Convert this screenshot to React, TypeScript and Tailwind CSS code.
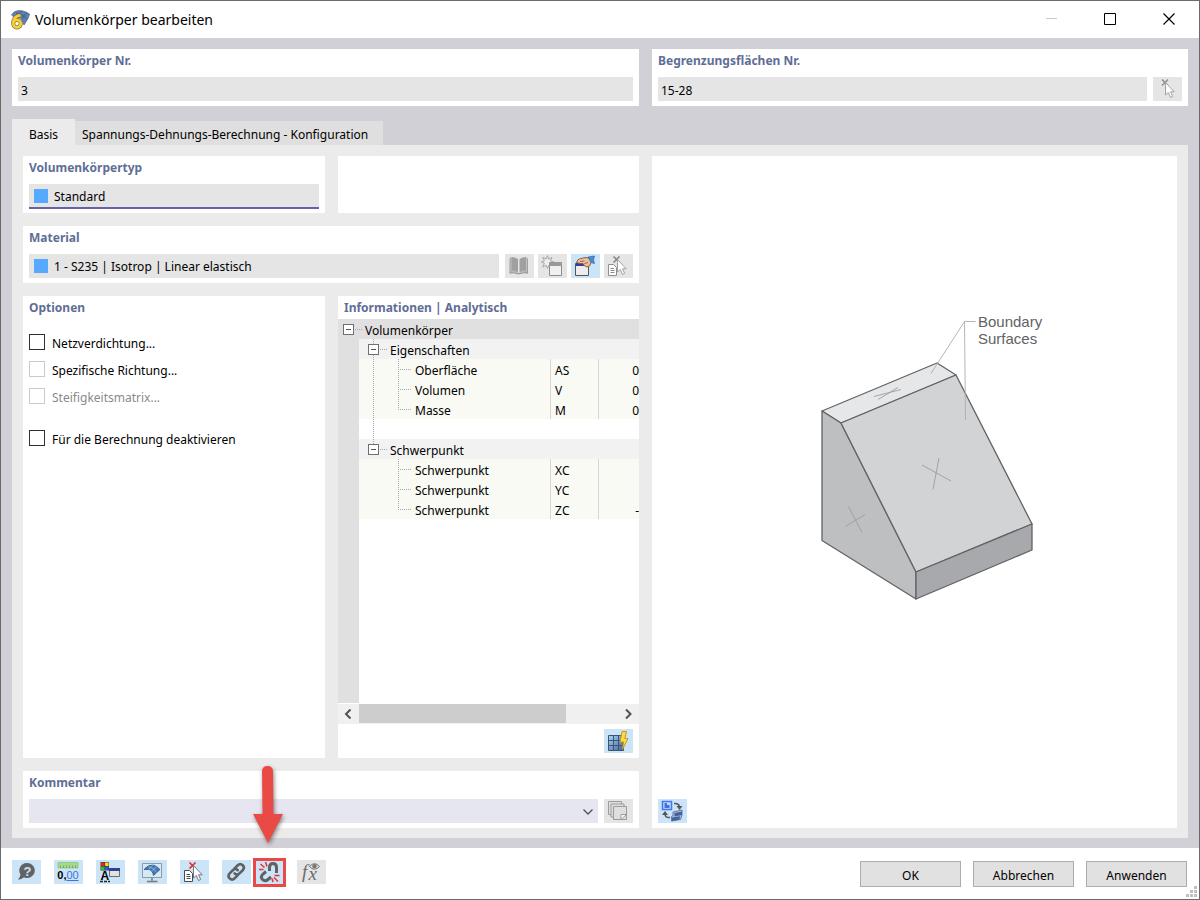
import type { ReactNode } from "react";

const titleText = "text-[12px] leading-6 font-bold text-[#5f6e96]";
const fieldText = "text-[12px] leading-[18px] text-black";

function Card({ title, className = "", children }: { title?: string; className?: string; children?: ReactNode }) {
  return (
    <section className={`min-w-0 bg-white px-1.5 pb-1 ${className}`}>
      {title && <h2 className={titleText}>{title}</h2>}
      {children}
    </section>
  );
}

function IconButton({ label, tone, children }: { label: string; tone: "blue" | "gray"; children: ReactNode }) {
  return (
    <button
      type="button"
      aria-label={label}
      className={`h-6 w-[29px] shrink-0 ${tone === "blue" ? "bg-[#cbe4f8]" : "bg-[#e5e5e5]"}`}
    >
      <svg viewBox="0 0 29 24" className="block h-6 w-[29px]" fill="none">
        {children}
      </svg>
    </button>
  );
}

function AppIcon() {
  return (
    <svg viewBox="0 0 20 20" className="h-5 w-5 shrink-0" fill="none">
      <path d="M1.500 5 L4 2 Q8 -.5 13 1 Q17 2 19.500 4 L18.500 7.500 L16.500 11 L14 15 L11 8 L5 8 Z" fill="#5c80b4" stroke="#5d6f89" strokeWidth=".8" />
      <path d="M6 3 Q12 3 17 9 M12 1 Q9 3 7 6 M17 3 Q13 5 12 9" stroke="#385682" strokeWidth=".8" />
      <path d="M10.500 5.200 Q4 6 3.200 12.500" stroke="#7d6a2a" strokeWidth="4" />
      <circle cx="7" cy="13.600" r="3.800" stroke="#7d6a2a" strokeWidth="4" />
      <path d="M10.500 5.200 Q4 6 3.200 12.500" stroke="#f5cf36" strokeWidth="2.800" />
      <circle cx="7" cy="13.600" r="3.800" stroke="#f5cf36" strokeWidth="2.800" />
    </svg>
  );
}

const cursor = "M0 0 L0 12.500 L2.800 10 L5 15 L7.200 14 L5 9.300 L8.700 9.300 Z";

function PickIcon() {
  return (
    <>
      <path d="M9 2.500 L15 8.500 M15 2.500 L9 8.500" stroke="#8c8c8c" strokeWidth="1.500" />
      <path transform="translate(12.500 5.500)" d={cursor} fill="#fff" stroke="#a2a2a2" />
    </>
  );
}

function BookIcon() {
  return (
    <>
      <path d="M4.500 5 L6 3 Q10 3 13 5 L13 19 Q9 17 4.500 19 Z M23 5 L21.500 3 Q17.500 3 14.500 5 L14.500 19 Q18.500 17 23 19 Z" fill="#a0a0a0" />
      <path d="M6 3 L6 17 Q10 16.500 13.500 19.500 Q17 16.500 21.500 17 L21.500 3" stroke="#c2c2c2" />
      <path d="M4.500 19 Q9 18 13.500 20 Q18 18 23 19" stroke="#8b8b8b" />
    </>
  );
}

function NewIcon() {
  return (
    <>
      <path d="M9.500 1.500 L10.600 5.200 L14 3.500 L12.500 7 L16 8 L12.500 9.300 L14 13 L10.800 11.300 L9.500 14.500 L8.200 11.300 L4.800 13 L6.400 9.300 L3.500 8 L6.400 6.800 L4.800 3.500 L8.200 5 Z" fill="#eee" stroke="#a8a8a8" />
      <path d="M11.500 9.500 H23.500 V21.500 H11.500 Z" fill="#f0f0f0" stroke="#8c8c8c" />
      <path d="M11 8 H24 V12 H11 Z" fill="#999" />
    </>
  );
}

function EditIcon() {
  return (
    <>
      <path d="M4.500 9.500 H17.500 V21.500 H4.500 Z" fill="#ededed" stroke="#555" />
      <path d="M5 9 H17 V12 H5 Z" fill="#2f3fa0" />
      <path d="M5.500 8.500 Q6.500 5 9.500 4.500 L15 3.500 L19.500 4.500 L20 8.500 L18.500 12 L16 13 L13.500 11.800 L12 9.500 L9 9.500 Z" fill="#ecc09a" stroke="#8f5e3c" />
      <path d="M9 7.500 L13.500 7 M13.500 9.500 L17 8.500" stroke="#99633f" />
      <path d="M17 3 L23.500 2 L22.500 6 L23.500 9.500 L20 8.500 Z" fill="#4a8bd3" stroke="#376aa5" strokeWidth=".7" />
    </>
  );
}

function PickFromListIcon({ active = false }: { active?: boolean }) {
  const line = active ? "#4b4b4b" : "#8e8e8e";
  return (
    <>
      <path d="M4.500 10.500 H9.500 L12.500 13.500 V21.500 H4.500 Z" fill="#fff" stroke={line} />
      <path d="M6.500 14.500 H10 M6.500 16.500 H10.500 M6.500 18.500 H10.500" stroke={line} />
      <path d="M9.500 2.500 L15.500 8.500 M15.500 2.500 L9.500 8.500" stroke={active ? "#ee2525" : "#888"} strokeWidth="1.600" />
      <path transform="translate(13.500 5.500)" d={cursor} fill="#fff" stroke={active ? "#777" : "#a2a2a2"} />
    </>
  );
}

function GridFlashIcon() {
  return (
    <>
      <defs>
        <linearGradient id="gridBlue" x1="0" y1="0" x2="1" y2="1">
          <stop stopColor="#a9d6f5" />
          <stop offset="1" stopColor="#426191" />
        </linearGradient>
      </defs>
      <path d="M4.500 6.500 H19.500 V21.500 H4.500 Z" fill="url(#gridBlue)" stroke="#3c5479" />
      <path d="M9.500 6.500 V21.500 M14.500 6.500 V21.500 M4.500 11.500 H19.500 M4.500 16.500 H19.500" stroke="#3c5479" />
      <path d="M18 2.500 H22.500 L20.800 9.500 H24 L18.500 20.500 L19.500 13 H16 Z" fill="#fbdc3b" stroke="#c7942d" />
    </>
  );
}

function CopiesIcon() {
  return (
    <g stroke="#9b9b9b" fill="#dfdfdf">
      <path d="M4.500 2.500 H17.500 V15.500 H4.500 Z" />
      <path d="M7 5 H20 V18 H7 Z" />
      <path d="M9.500 7.500 H22.500 V20.500 H9.500 Z" />
      <path d="M17 20.500 V15.500 H22.500 L17 20.500" fill="#fff" />
    </g>
  );
}

function SwapViewIcon() {
  return (
    <>
      <path d="M4.500 2.500 H13.500 V10.500 H4.500 Z" fill="#c5d9fb" stroke="#4478e8" strokeWidth="1.500" />
      <path d="M6.500 4 H9 V6 H11.500 V9 H6.500 Z" fill="#3e72e4" />
      <path d="M16 4.500 Q21 4 21.500 8" stroke="#565656" strokeWidth="1.500" />
      <path d="M18.500 7 H24.500 L21.500 11 Z" fill="#565656" />
      <path d="M12 18.500 Q7 19 7 15" stroke="#565656" strokeWidth="1.500" />
      <path d="M4 16 H10 L7 12 Z" fill="#565656" />
      <path d="M15 13 L24 11 V16 L22.500 20.500 L13.500 22 V17.500 L15 16.500 Z" fill="#a9bedd" stroke="#4c6697" strokeWidth=".8" />
      <path d="M16.500 14 L24 12.500 V16 L16.500 17.500 Z M14 18.500 L22 17.300 L21.500 20.500 L14 22 Z" fill="#466399" />
    </>
  );
}

function HelpIcon() {
  return (
    <>
      <path d="M15.500 3 A7.500 7.500 0 1 1 12 17.200 Q9.500 19.500 6 19.800 Q8 17.500 8.500 14.500 A7.500 7.500 0 0 1 15.500 3 Z" fill="#626262" />
      <text x="15.500" y="15.500" textAnchor="middle" className="fill-[#cbe4f8] font-['Liberation_Sans'] text-[13px] font-bold">?</text>
    </>
  );
}

function DecimalsIcon() {
  return (
    <>
      <path d="M4 2.500 H24 V8 H4 Z" fill="#a5d98e" stroke="#8fc577" strokeWidth=".8" />
      <path d="M6.500 5.500 V8 M9.500 5.500 V8 M12.500 5.500 V8 M15.500 5.500 V8 M18.500 5.500 V8 M21.500 5.500 V8" stroke="#6fa458" strokeWidth=".8" />
      <text x="14" y="18.500" textAnchor="middle" className="fill-black font-['Liberation_Sans',sans-serif] text-[11px] font-bold">
        0,<tspan className="fill-[#3974dc] font-normal">00</tspan>
      </text>
      <path d="M12.500 20.500 H24.500" stroke="#3974dc" />
    </>
  );
}

function DisplayPropsIcon() {
  return (
    <>
      <path d="M4.500 2 H13 V10.500 H4.500 Z" fill="#3c3c3c" />
      <path d="M5 2.500 H8.500 V6 H5 Z" fill="#ee2020" />
      <path d="M9.200 2.500 H12.500 V6 H9.200 Z" fill="#f5e51e" />
      <path d="M5 6.700 H8.500 V10 H5 Z" fill="#26c426" />
      <path d="M9.200 6.700 H12.500 V10 H9.200 Z" fill="#3157e5" />
      <text x="4.500" y="19.500" className="fill-black font-['Liberation_Sans'] text-[12px] font-bold">A</text>
      <path d="M4 21.500 H7 M8 21.500 H11 M12 21.500 H14" stroke="#222" strokeWidth="1.500" />
      <path d="M13.500 8.500 H23.500 V16.500 H13.500 Z" fill="#e2e2e2" stroke="#6c6c6c" />
      <path d="M13 8 H24 V11 H13 Z" fill="#333f94" />
    </>
  );
}

function MonitorIcon() {
  return (
    <>
      <path d="M4.500 3.500 H23.500 V17.500 H4.500 Z" fill="#d7e9f7" stroke="#8b9ba8" />
      <path d="M14 18 V20.500 M9 21.500 H19.500" stroke="#777" strokeWidth="1.500" />
      <path d="M6 9.500 Q10 4.500 15 5 Q19 6 22 9.500 L15.500 15.500 Q14.500 10 10.500 9.500 Z" fill="#4279b5" stroke="#315883" strokeWidth=".8" />
      <path d="M10 6.500 Q16 7.500 18.500 12.500 M15 5 Q12 7 11 9.500 M18.500 7 Q15 9 14 11.500" stroke="#a3c9e8" strokeWidth=".6" />
    </>
  );
}

function LinkIcon() {
  return (
    <g transform="rotate(-45 14 12)" stroke="#616161" strokeWidth="2.600" strokeLinecap="round">
      <path d="M13 15.500 H8.500 Q5 15.500 5 12 Q5 8.500 8.500 8.500 H13 Q16.500 8.500 16.500 12" />
      <path d="M15.500 8.500 H20 Q23.500 8.500 23.500 12 Q23.500 15.500 20 15.500 H15.500 Q12 15.500 12 12" />
    </g>
  );
}

function UnlinkIcon() {
  return (
    <>
      <path d="M14.500 11 V7.500 Q14.500 3.500 18 3.500 Q21.500 3.500 21.500 7.500 V13" stroke="#616161" strokeWidth="3" />
      <path d="M11 11.500 L8 14 Q5 17 7.500 19.500 Q10 22 13 19.500 L16 17" stroke="#616161" strokeWidth="3" />
      <path d="M5.500 4 L9.500 7.500 M10.500 2 L12 6.500 M4 9.500 H8.500 M19.500 15.500 H24.500 M19 17.500 L23 21.500 M17 18.500 L18 22" stroke="#f52b2b" strokeWidth="1.500" />
    </>
  );
}

function FormulaIcon() {
  return (
    <>
      <text x="5" y="18" className="fill-[#6b6b6b] font-['Liberation_Serif'] text-[19px] italic">f</text>
      <text x="11.500" y="20" className="fill-[#6b6b6b] font-['Liberation_Serif'] text-[19px] italic">x</text>
      <path d="M12.500 6.500 Q17.500 .8 22.500 6.500 Q17.500 12 12.500 6.500 Z" fill="#e5e5e5" stroke="#777" />
      <circle cx="17.500" cy="6.200" r="2.200" fill="#777" />
    </>
  );
}

function CheckRow({ id, label, disabled, muted, className = "" }: { id: string; label: string; disabled?: boolean; muted?: boolean; className?: string }) {
  return (
    <div className={`flex h-4 items-center gap-[7px] ${className}`}>
      <input
        id={id}
        type="checkbox"
        disabled={disabled}
        className="m-0 h-4 w-4 shrink-0 appearance-none border border-[#2f2f2f] bg-white checked:bg-[#5f6e96] disabled:border-[#cacaca]"
      />
      <label htmlFor={id} className={`pt-1 text-[12px] leading-[18px] ${muted ? "text-[#8a8a8a]" : "text-black"}`}>
        {label}
      </label>
    </div>
  );
}

function Expander({ x }: { x: number }) {
  return (
    <>
      <rect x={x + 0.5} y="5.500" width="10" height="10" fill="#fff" stroke="#6f6f6f" />
      <path d={`M${x + 3} 10.500 H${x + 8}`} stroke="#555" />
      <path d={`M${x + 12} 10.500 H${x + 19}`} stroke="#a8a8a8" strokeDasharray="1 1" />
    </>
  );
}

function GroupRow({ label, first }: { label: string; first?: boolean }) {
  return (
    <tr className="h-5 bg-[#f2f2f2]">
      <td className="bg-[#e0e0e0] p-0" />
      <th colSpan={3} scope="rowgroup" className="p-0 text-left font-normal">
        <div className="flex h-5 items-center">
          <svg viewBox="0 0 31 20" className="h-5 w-[31px] shrink-0" fill="none">
            <path d={first ? "M14.500 0 V20" : "M14.500 0 V6"} stroke="#a8a8a8" strokeDasharray="1 1" />
            <Expander x={9} />
          </svg>
          <span className="pt-1">{label}</span>
        </div>
      </th>
    </tr>
  );
}

function LeafRow({ label, symbol, value, trunk, last }: { label: string; symbol: string; value: string; trunk?: boolean; last?: boolean }) {
  return (
    <tr className="h-5 bg-[#f9faf4]">
      <td className="bg-[#e0e0e0] p-0" />
      <td className="border-r border-[#d6d6d6] p-0">
        <div className="flex h-5 items-center">
          <svg viewBox="0 0 56 20" className="h-5 w-14 shrink-0" fill="none">
            {trunk && <path d="M14.500 0 V20" stroke="#a8a8a8" strokeDasharray="1 1" />}
            <path d={last ? "M39.500 0 V11" : "M39.500 0 V20"} stroke="#a8a8a8" strokeDasharray="1 1" />
            <path d="M41 10.500 H53" stroke="#a8a8a8" strokeDasharray="1 1" />
          </svg>
          <span className="pt-1">{label}</span>
        </div>
      </td>
      <td className="border-r border-[#d6d6d6] p-0">
        <div className="flex h-5 items-center pt-1 pl-1">
          {symbol[0]}
          <span className="text-[12px] leading-4">{symbol.slice(1)}</span>
        </div>
      </td>
      <td className="p-0">
        <div className="flex h-5 items-center justify-end pt-1">{value}</div>
      </td>
    </tr>
  );
}

function InfoTable() {
  return (
    <table className="w-full table-fixed border-separate border-spacing-0 text-[12px] leading-4 text-black">
      <colgroup>
        <col className="w-[21px]" />
        <col className="w-[192px]" />
        <col className="w-12" />
        <col />
      </colgroup>
      <tbody>
        <tr className="h-5 bg-[#e0e0e0]">
          <th colSpan={4} scope="colgroup" className="p-0 text-left font-normal">
            <div className="flex h-5 items-center">
              <svg viewBox="0 0 27 20" className="h-5 w-[27px] shrink-0" fill="none">
                <Expander x={5} />
              </svg>
              <span className="pt-1">Volumenkörper</span>
            </div>
          </th>
        </tr>
        <GroupRow label="Eigenschaften" first />
        <LeafRow label="Oberfläche" symbol="AS" value="0" trunk />
        <LeafRow label="Volumen" symbol="V" value="0" trunk />
        <LeafRow label="Masse" symbol="M" value="0" trunk last />
        <tr className="h-5">
          <td className="bg-[#e0e0e0] p-0" />
          <td colSpan={3} className="p-0">
            <svg viewBox="0 0 31 20" className="block h-5 w-[31px]" fill="none">
              <path d="M14.500 0 V20" stroke="#a8a8a8" strokeDasharray="1 1" />
            </svg>
          </td>
        </tr>
        <GroupRow label="Schwerpunkt" />
        <LeafRow label="Schwerpunkt" symbol="XC" value="" />
        <LeafRow label="Schwerpunkt" symbol="YC" value="" />
        <LeafRow label="Schwerpunkt" symbol="ZC" value="-" last />
      </tbody>
    </table>
  );
}

function SolidDrawing() {
  return (
    <svg viewBox="783 313 263 329" className="h-[329px] w-[263px]" fill="none" role="img" aria-label="Boundary Surfaces">
      <g stroke="#626366" strokeWidth="1.300" strokeLinejoin="round">
        <path d="M822 411 L937 363 L956 375 L841 423 Z" fill="#e6e7e9" />
        <path d="M822 411 L841 423 L916 572 L916 599 L822 540.500 Z" fill="#bebfc1" />
        <path d="M841 423 L956 375 L1032 524 L916 572 Z" fill="#d2d3d5" />
        <path d="M916 572 L1032 524 L1032 550 L916 599 Z" fill="#a8a9ad" />
      </g>
      <g stroke="#9c9da0" strokeWidth=".9">
        <path d="M874 396.500 L901 389.500 M878 399.500 L898 387.500" />
        <path d="M922 465 L951 481 M939 458 L933 489.500" />
        <path d="M848.500 506.500 L862 532.500 M845.500 526.500 L865 514.500" />
        <path d="M975.500 321.500 H964.500 L931 373.500 M964.500 321.500 L965.500 420" stroke="#adadad" />
      </g>
      <text className="fill-[#626366] font-['Liberation_Sans',Arial,sans-serif] text-[15px]">
        <tspan x="978" y="327">Boundary</tspan>
        <tspan x="978" y="344">Surfaces</tspan>
      </text>
    </svg>
  );
}

function DialogButton({ children }: { children: ReactNode }) {
  return (
    <button type="button" className="h-[26px] w-[101px] border border-[#adadad] bg-[#e1e1e1] pt-1 text-[12px] leading-[18px] text-black">
      {children}
    </button>
  );
}

export default function App() {
  return (
    <div className="flex min-h-screen flex-col border border-[#6b6b6b] bg-white font-['Noto_Sans','Open_Sans',sans-serif]">
      <header className="flex h-[37px] shrink-0 items-center pl-[9px]">
        <AppIcon />
        <h1 className="ml-[5px] flex-1 text-[14px] leading-5 text-black">Volumenkörper bearbeiten</h1>
        <button type="button" aria-label="Minimieren" className="flex h-9 w-[59px] items-center justify-center">
          <svg viewBox="0 0 13 13" className="h-[13px] w-[13px]" fill="none"><path d="M1 5.500 H12" stroke="#ccc" /></svg>
        </button>
        <button type="button" aria-label="Maximieren" className="flex h-9 w-[59px] items-center justify-center">
          <svg viewBox="0 0 13 13" className="h-[13px] w-[13px]" fill="none"><path d="M.5 .5 H11.500 V11.500 H.5 Z" stroke="#000" /></svg>
        </button>
        <button type="button" aria-label="Schließen" className="flex h-9 w-[59px] items-center justify-center">
          <svg viewBox="0 0 13 13" className="h-[13px] w-[13px]" fill="none"><path d="M.5 .5 L11.500 11.500 M11.500 .5 L.5 11.500" stroke="#000" strokeWidth="1.200" /></svg>
        </button>
      </header>

      <main className="flex flex-1 flex-col bg-[#d1d0d6] px-[11px] pt-[11px] pb-2.5">
        <div className="grid grid-cols-[627fr_536fr] gap-[13px]">
          <Card>
            <label htmlFor="solid-no" className={`block ${titleText}`}>Volumenkörper Nr.</label>
            <input id="solid-no" readOnly defaultValue="3" className={`mt-1 mb-[1px] block h-6 w-full bg-[#e5e5e5] px-[3px] pt-0.5 outline-none ${fieldText}`} />
          </Card>
          <Card>
            <label htmlFor="surface-no" className={`block ${titleText}`}>Begrenzungsflächen Nr.</label>
            <div className="mt-1 mb-[1px] flex gap-1.5">
              <input id="surface-no" readOnly defaultValue="15-28" className={`h-6 min-w-0 flex-1 bg-[#e5e5e5] px-[3px] pt-0.5 outline-none ${fieldText}`} />
              <IconButton label="Flächen auswählen" tone="gray"><PickIcon /></IconButton>
            </div>
          </Card>
        </div>

        <div role="tablist" className="mt-[13px] flex items-end text-[12px] leading-[18px] text-black">
          <button type="button" role="tab" aria-selected="true" className="h-[26px] w-[63px] bg-[#ebebeb] pt-1.5">Basis</button>
          <button type="button" role="tab" aria-selected="false" className="h-6 w-[308px] bg-[#dfdfdf] px-[7px] pt-1 text-left whitespace-nowrap">
            Spannungs-Dehnungs-Berechnung - Konfiguration
          </button>
        </div>

        <div role="tabpanel" className="grid flex-1 grid-cols-[616fr_525fr] gap-[13px] bg-[#ebebeb] px-[11px] pt-[11px] pb-2.5">
          <div className="flex min-w-0 flex-col gap-[13px]">
            <div className="grid grid-cols-[302fr_301fr] gap-[13px]">
              <Card>
                <label htmlFor="solid-type" className={`block ${titleText}`}>Volumenkörpertyp</label>
                <div className="mt-1 flex h-[25px] items-center gap-1.5 border-b-2 border-[#6263a9] bg-[#e5e5e5] pl-[5px]">
                  <span className="h-3.5 w-3.5 shrink-0 bg-[#55aaff]" />
                  <select id="solid-type" className={`h-full min-w-0 flex-1 appearance-none pt-0.5 outline-none ${fieldText}`}>
                    <option>Standard</option>
                  </select>
                </div>
              </Card>
              <Card />
            </div>

            <Card>
              <label htmlFor="material" className={`block ${titleText}`}>Material</label>
              <div className="mt-1 mb-[1px] flex gap-1">
                <div className="mr-0.5 flex h-6 min-w-0 flex-1 items-center gap-1.5 bg-[#e5e5e5] pl-[5px]">
                  <span className="h-3.5 w-3.5 shrink-0 bg-[#55aaff]" />
                  <select id="material" className={`h-full min-w-0 flex-1 appearance-none pt-0.5 outline-none ${fieldText}`}>
                    <option>1 - S235 | Isotrop | Linear elastisch</option>
                  </select>
                </div>
                <IconButton label="Materialbibliothek" tone="gray"><BookIcon /></IconButton>
                <IconButton label="Neues Material" tone="gray"><NewIcon /></IconButton>
                <IconButton label="Material bearbeiten" tone="blue"><EditIcon /></IconButton>
                <IconButton label="Material auswählen" tone="gray"><PickFromListIcon /></IconButton>
              </div>
            </Card>

            <div className="grid flex-1 grid-cols-[302fr_301fr] gap-[13px]">
              <Card title="Optionen">
                <div className="mt-3.5 flex flex-col gap-[11px]">
                  <CheckRow id="mesh" label="Netzverdichtung..." />
                  <CheckRow id="direction" label="Spezifische Richtung..." disabled />
                  <CheckRow id="stiffness" label="Steifigkeitsmatrix..." disabled muted />
                  <CheckRow id="deactivate" label="Für die Berechnung deaktivieren" className="mt-[15px]" />
                </div>
              </Card>

              <section className="flex min-w-0 flex-col bg-white">
                <h2 className={`h-[23px] px-1.5 ${titleText}`}>Informationen | Analytisch</h2>
                <InfoTable />
                <div className="w-[21px] flex-1 bg-[#e0e0e0]" />
                <div className="mt-[1px] flex h-5 bg-[#f0f0f0]">
                  <button type="button" aria-label="Nach links" className="flex h-5 w-[21px] items-center justify-center">
                    <svg viewBox="0 0 9 10" className="h-2.5 w-[9px]" fill="none"><path d="M6.500 .5 L2 5 L6.500 9.500" stroke="#505050" strokeWidth="2" /></svg>
                  </button>
                  <div className="flex-1"><div className="h-[19px] w-4/5 bg-[#cdcdcd]" /></div>
                  <button type="button" aria-label="Nach rechts" className="flex h-5 w-[21px] items-center justify-center">
                    <svg viewBox="0 0 9 10" className="h-2.5 w-[9px]" fill="none"><path d="M2 .5 L6.500 5 L2 9.500" stroke="#505050" strokeWidth="2" /></svg>
                  </button>
                </div>
                <div className="flex justify-end px-1.5 py-[5px]">
                  <IconButton label="Berechnen" tone="blue"><GridFlashIcon /></IconButton>
                </div>
              </section>
            </div>

            <Card>
              <label htmlFor="comment" className={`block ${titleText}`}>Kommentar</label>
              <div className="mt-1 mb-[1px] flex gap-1.5">
                <div className="relative h-6 min-w-0 flex-1 bg-[#e6e6f1]">
                  <select id="comment" className={`h-full w-full appearance-none px-1 outline-none ${fieldText}`}>
                    <option />
                  </select>
                  <svg viewBox="0 0 10 6" className="pointer-events-none absolute top-[10px] right-[5px] h-1.5 w-2.5" fill="none">
                    <path d="M.5 .5 L5 5 L9.500 .5" stroke="#505050" strokeWidth="1.300" />
                  </svg>
                </div>
                <IconButton label="Kommentare" tone="gray"><CopiesIcon /></IconButton>
              </div>
            </Card>
          </div>

          <section className="flex min-w-0 flex-col bg-white">
            <div className="flex flex-1 items-center justify-center">
              <SolidDrawing />
            </div>
            <div className="flex px-1.5 pb-[5px]">
              <IconButton label="Ansicht wechseln" tone="blue"><SwapViewIcon /></IconButton>
            </div>
          </section>
        </div>
      </main>

      <footer className="relative flex h-[51px] shrink-0 items-start justify-between pt-3 pr-3 pl-[11px]">
        <div className="flex gap-[13px]">
          <IconButton label="Hilfe" tone="blue"><HelpIcon /></IconButton>
          <IconButton label="Einheiten und Dezimalstellen" tone="blue"><DecimalsIcon /></IconButton>
          <IconButton label="Anzeigeeigenschaften" tone="blue"><DisplayPropsIcon /></IconButton>
          <IconButton label="Ansicht" tone="blue"><MonitorIcon /></IconButton>
          <IconButton label="Objekt auswählen" tone="blue"><PickFromListIcon active /></IconButton>
          <div className="flex gap-1">
            <IconButton label="Verknüpfen" tone="blue"><LinkIcon /></IconButton>
            <div className="relative flex">
              <IconButton label="Verknüpfung aufheben" tone="blue"><UnlinkIcon /></IconButton>
              <span className="pointer-events-none absolute -inset-x-0.5 -top-0.5 -bottom-[3px] border-[3px] border-[#ea4a46]" />
              <svg viewBox="0 0 36 84" className="pointer-events-none absolute bottom-9 -left-1 h-[84px] w-9 drop-shadow-[1px_2px_2px_rgba(0,0,0,0.45)]">
                <path d="M11 7.500 Q11 2 16.500 2 Q22 2 22 7.500 L22.500 50 H32 L17 79 L2 50 H11.500 Z" fill="#ea4a46" />
              </svg>
            </div>
          </div>
          <IconButton label="Formel" tone="gray"><FormulaIcon /></IconButton>
        </div>
        <div className="mt-[1px] flex gap-3">
          <DialogButton>OK</DialogButton>
          <DialogButton>Abbrechen</DialogButton>
          <DialogButton>Anwenden</DialogButton>
        </div>
        <svg viewBox="0 0 11 11" className="absolute right-0.5 bottom-0.5 h-[11px] w-[11px]" fill="#bfbfbf">
          <path d="M8 0 h3 v3 h-3 Z M4 4 h3 v3 h-3 Z M8 4 h3 v3 h-3 Z M0 8 h3 v3 h-3 Z M4 8 h3 v3 h-3 Z M8 8 h3 v3 h-3 Z" />
        </svg>
      </footer>
    </div>
  );
}
